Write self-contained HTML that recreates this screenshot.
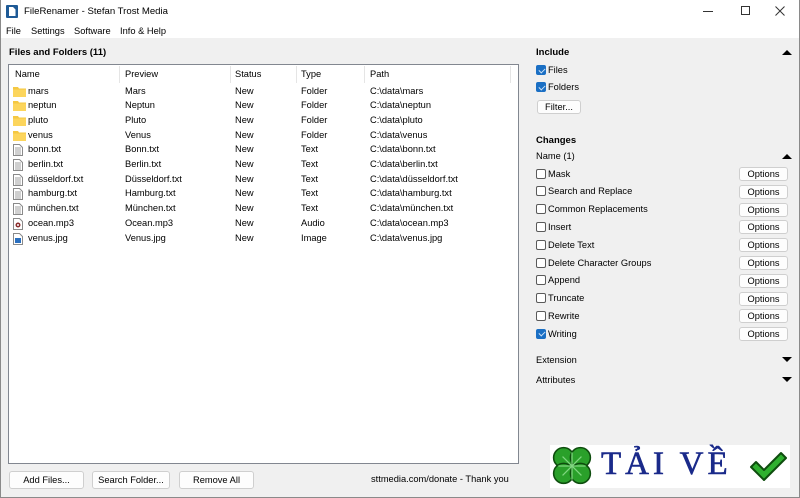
<!DOCTYPE html>
<html><head><meta charset="utf-8"><style>
*{margin:0;padding:0;box-sizing:border-box}
body{width:800px;height:498px;overflow:hidden;background:#f0f0f0;font-family:"Liberation Sans",sans-serif;font-size:9.3px;color:#000;position:relative}
.a{position:absolute;white-space:nowrap}
.win{position:absolute;left:0;top:0;width:800px;height:498px;border:1px solid #8a8a8a;border-top:none}
.btn{position:absolute;background:#fdfdfd;border:1px solid #cfcfcf;border-radius:3px;text-align:center;font-size:9.3px;line-height:16px}
.cb{position:absolute;width:10px;height:10px;border:1px solid #5a5a5a;border-radius:2px;background:#fff}
.cb.on{background:#1a6fc4;border-color:#1a6fc4}
.cb.on::after{content:"";position:absolute;left:2.5px;top:0.5px;width:3px;height:5px;border:solid #cfe3f7;border-width:0 1px 1px 0;transform:rotate(45deg)}
.tri{position:absolute;width:0;height:0;border-left:5px solid transparent;border-right:5px solid transparent}
.up{border-bottom:5px solid #000}.dn{border-top:5px solid #000}
b{font-size:9.5px}
</style></head><body>
<div class="a" style="left:0;top:0;width:800px;height:38px;background:#fff"></div>
<svg class="a" style="left:6px;top:5px" width="12" height="13" viewBox="0 0 12 13"><rect x="0" y="0" width="12" height="13" rx="1" fill="#1e5a96"/><path d="M3 2h4l2.5 2.5V11H3z" fill="#fff"/></svg>
<div class="a" style="left:24px;top:6px;font-size:9.6px">FileRenamer - Stefan Trost Media</div>
<div class="a" style="left:703px;top:11px;width:10px;height:1px;background:#333"></div>
<div class="a" style="left:741px;top:6px;width:9px;height:9px;border:1px solid #333"></div>
<svg class="a" style="left:775px;top:6px" width="10" height="10"><path d="M0.5 0.5L9.5 9.5M9.5 0.5L0.5 9.5" stroke="#333" stroke-width="1"/></svg>
<div class="a" style="left:6px;top:26px">File</div>
<div class="a" style="left:31px;top:26px">Settings</div>
<div class="a" style="left:74px;top:26px">Software</div>
<div class="a" style="left:120px;top:26px">Info &amp; Help</div>
<div class="win"></div>

<div class="a" style="left:9px;top:47px;font-weight:bold"><b>Files and Folders (11)</b></div>
<div class="a" style="left:8px;top:64px;width:511px;height:400px;background:#fff;border:1px solid #828790"></div>
<div class="a" style="left:119px;top:66px;width:1px;height:17px;background:#e5e5e5"></div>
<div class="a" style="left:230px;top:66px;width:1px;height:17px;background:#e5e5e5"></div>
<div class="a" style="left:296px;top:66px;width:1px;height:17px;background:#e5e5e5"></div>
<div class="a" style="left:364px;top:66px;width:1px;height:17px;background:#e5e5e5"></div>
<div class="a" style="left:510px;top:66px;width:1px;height:17px;background:#e5e5e5"></div>
<div class="a" style="left:15px;top:69px">Name</div>
<div class="a" style="left:125px;top:69px">Preview</div>
<div class="a" style="left:235px;top:69px">Status</div>
<div class="a" style="left:301px;top:69px">Type</div>
<div class="a" style="left:370px;top:69px">Path</div>

<div id="rows"></div>
<script>
var r=[["f","mars","Mars","Folder","C:\\data\\mars"],["f","neptun","Neptun","Folder","C:\\data\\neptun"],["f","pluto","Pluto","Folder","C:\\data\\pluto"],["f","venus","Venus","Folder","C:\\data\\venus"],["t","bonn.txt","Bonn.txt","Text","C:\\data\\bonn.txt"],["t","berlin.txt","Berlin.txt","Text","C:\\data\\berlin.txt"],["t","düsseldorf.txt","Düsseldorf.txt","Text","C:\\data\\düsseldorf.txt"],["t","hamburg.txt","Hamburg.txt","Text","C:\\data\\hamburg.txt"],["t","münchen.txt","München.txt","Text","C:\\data\\münchen.txt"],["m","ocean.mp3","Ocean.mp3","Audio","C:\\data\\ocean.mp3"],["i","venus.jpg","Venus.jpg","Image","C:\\data\\venus.jpg"]];
var h="";
var ic={f:'<svg width="13" height="11"><path d="M0 1h5l1 1.5h7V11H0z" fill="#f5c842"/><rect x="0" y="3.5" width="13" height="7.5" fill="#fcd55c"/></svg>',
t:'<svg width="10" height="12"><path d="M0.5 0.5h6l3 3v8h-9z" fill="#fff" stroke="#8a8a8a"/><path d="M2 4h6M2 6h6M2 8h6M2 10h6" stroke="#a0a0a0"/></svg>',
m:'<svg width="10" height="12"><path d="M0.5 0.5h6l3 3v8h-9z" fill="#fff" stroke="#8a8a8a"/><circle cx="5" cy="7" r="2.5" fill="#8b2d2d"/><circle cx="5" cy="7" r="1" fill="#fff"/></svg>',
i:'<svg width="10" height="12"><path d="M0.5 0.5h6l3 3v8h-9z" fill="#fff" stroke="#8a8a8a"/><rect x="2" y="5" width="6" height="5" fill="#2a6fbf"/></svg>'};
for(var k=0;k<r.length;k++){var y=85.5+k*14.7;var x=r[k];
h+='<div class="a" style="left:13px;top:'+(y)+'px">'+ic[x[0]]+'</div>';
h+='<div class="a" style="left:28px;top:'+y+'px">'+x[1]+'</div>';
h+='<div class="a" style="left:125px;top:'+y+'px">'+x[2]+'</div>';
h+='<div class="a" style="left:235px;top:'+y+'px">New</div>';
h+='<div class="a" style="left:301px;top:'+y+'px">'+x[3]+'</div>';
h+='<div class="a" style="left:370px;top:'+y+'px">'+x[4]+'</div>';}
document.getElementById("rows").innerHTML=h;
</script>

<div class="btn" style="left:9px;top:471px;width:75px;height:18px">Add Files...</div>
<div class="btn" style="left:92px;top:471px;width:78px;height:18px">Search Folder...</div>
<div class="btn" style="left:179px;top:471px;width:75px;height:18px">Remove All</div>
<div class="a" style="left:371px;top:474px">sttmedia.com/donate - Thank you</div>

<div class="a" style="left:536px;top:47px;font-weight:bold"><b>Include</b></div>
<div class="tri up" style="left:782px;top:50px"></div>
<div class="cb on" style="left:536px;top:65px"></div><div class="a" style="left:548px;top:65px">Files</div>
<div class="cb on" style="left:536px;top:82px"></div><div class="a" style="left:548px;top:82px">Folders</div>
<div class="btn" style="left:537px;top:100px;width:44px;height:14px;line-height:12px">Filter...</div>
<div class="a" style="left:536px;top:135px;font-weight:bold"><b>Changes</b></div>
<div class="a" style="left:536px;top:151px">Name (1)</div>
<div class="tri up" style="left:782px;top:154px"></div>
<div id="opts"></div>
<script>
var o=["Mask","Search and Replace","Common Replacements","Insert","Delete Text","Delete Character Groups","Append","Truncate","Rewrite","Writing"];var h="";
for(var k=0;k<o.length;k++){var y=174+k*17.8;
h+='<div class="cb'+(k==9?' on':'')+'" style="left:536px;top:'+(y-5.5)+'px"></div>';
h+='<div class="a" style="left:548px;top:'+(y-5.5)+'px">'+o[k]+'</div>';
h+='<div class="btn" style="left:739px;top:'+(y-7)+'px;width:49px;height:14px;line-height:12px">Options</div>';}
document.getElementById("opts").innerHTML=h;
</script>
<div class="a" style="left:536px;top:355px">Extension</div>
<div class="tri dn" style="left:782px;top:357px"></div>
<div class="a" style="left:536px;top:375px">Attributes</div>
<div class="tri dn" style="left:782px;top:377px"></div>

<div class="a" style="left:550px;top:445px;width:240px;height:43px;background:#fff"></div>
<svg class="a" style="left:551px;top:445px" width="42" height="42" viewBox="0 0 40 40">
<g fill="#2aa02a" stroke="#0e4d0e" stroke-width="1.5"><circle cx="12" cy="12" r="9.5"/><circle cx="28" cy="12" r="9.5"/><circle cx="12" cy="27" r="9.5"/><circle cx="28" cy="27" r="9.5"/></g>
<path d="M20 7v26M7 20h26M11 11l18 18M29 11l-18 18" stroke="#7fd67f" stroke-width="1.2"/>
</svg>
<div class="a" style="left:601px;top:446px;font-family:'Liberation Serif','DejaVu Serif',serif;font-size:33px;color:#1a2a8a;letter-spacing:4px;-webkit-text-stroke:0.6px #1a2a8a">TẢI VỀ</div>
<svg class="a" style="left:748px;top:451px" width="40" height="32" viewBox="0 0 40 32"><path d="M3 16l5-5 8 8L33 2l5 5-22 22z" fill="#2fb02f" stroke="#0e4d0e" stroke-width="2" stroke-linejoin="round"/></svg>
</body></html>
